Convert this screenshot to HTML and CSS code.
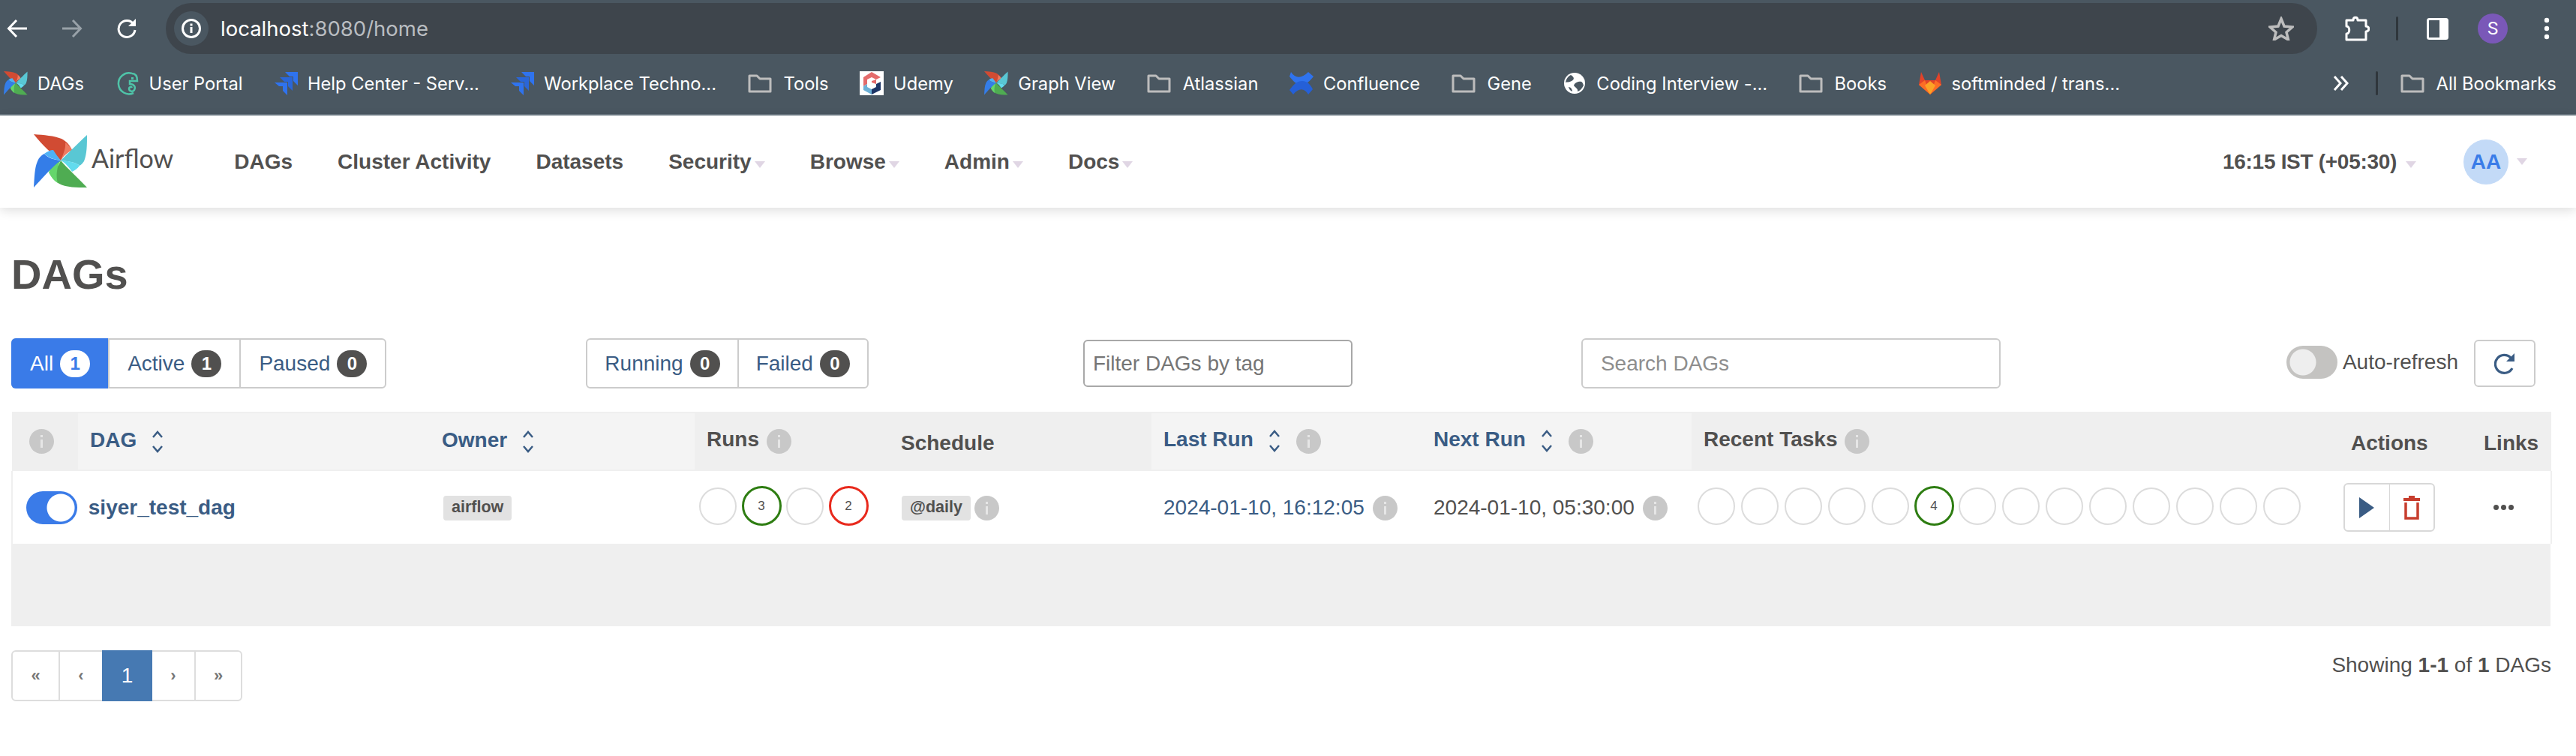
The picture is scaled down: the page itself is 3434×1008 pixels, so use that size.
FILE: index.html
```html
<!DOCTYPE html>
<html>
<head>
  <title>DAGs - Airflow</title>
  <link rel="stylesheet" href="styles.css">
</head>
<body>
  <svg class="defs" width="0" height="0">
    <symbol id="pinwheel" viewBox="0 0 72 72">
      <path fill="#d14b33" d="M0 0C14 1 27 2 37 6C43 9 48 14 51 21C44 24 39 29 36 35C26 28 11 14 0 0Z"/>
      <path fill="#ee7b62" d="M42 11C46 14 49 17 51 21C46 24 39 29 36 35C39 27 43 19 42 11Z"/>
      <path fill="#59c7d4" d="M71 1C71 14 71 26 67 36C65 39 63 41 61 42C57 37 43 36 36 35C44 27 58 13 71 1Z"/>
      <path fill="#62dbee" d="M36 35C43 36 55 36 61 42C58 46 55 48 51 50C47 44 42 38 36 35Z"/>
      <path fill="#4fac52" d="M71 71C57 71 44 71 34 66C29 63 24 58 21 51C28 48 33 43 36 35C44 45 60 59 71 71Z"/>
      <path fill="#65d66b" d="M36 35C31 42 29 55 32 65C27 62 23 57 20 51C22 44 29 38 36 35Z"/>
      <path fill="#347de8" d="M0 71C1 57 1 45 5 36C7 31 10 28 14 26C19 32 28 34 36 35C25 43 11 59 0 71Z"/>
      <path fill="#4fb1f5" d="M36 35C29 34 20 32 14 26C18 23 22 21 26 21C29 26 33 31 36 35Z"/>
    </symbol>
    <symbol id="jira" viewBox="0 0 32 32">
      <path fill="#2f73ee" d="M15 1H32V19L26 13V7H21Z"/>
      <path fill="#2a66d8" d="M8 8H25V26L19 20V14H14Z"/>
      <path fill="#2f73ee" d="M1 15H18V32L12 26V20H7Z"/>
    </symbol>
    <symbol id="folder" viewBox="0 0 32 32">
      <path fill="none" stroke="#bdbdbd" stroke-width="3" stroke-linejoin="round" d="M2 6H12L16 10H30V27H2Z"/>
    </symbol>
    <symbol id="info" viewBox="0 0 33 33">
      <circle cx="16.5" cy="16.5" r="16.5" fill="#c8c8c8"/>
      <rect x="15" y="14" width="3" height="11" fill="#e6e6e6"/>
      <rect x="15" y="8" width="3" height="3" fill="#e6e6e6"/>
    </symbol>
    <symbol id="sort" viewBox="0 0 16 30">
      <path fill="none" stroke="#3a5c84" stroke-width="2.5" d="M2 9L8 2L14 9M2 21L8 28L14 21"/>
    </symbol>
  </svg>

  <div class="toolbar">
    <svg class="tool-icon back" width="28" height="28" viewBox="0 0 28 28"><path fill="none" stroke="#fff" stroke-width="3" d="M27 14H3M13 3L2.5 14L13 25"/></svg>
    <svg class="tool-icon forward" width="28" height="28" viewBox="0 0 28 28"><path fill="none" stroke="#98a1a8" stroke-width="3" d="M1 14H25M15 3L25.5 14L15 25"/></svg>
    <svg class="tool-icon reload" width="28" height="28" viewBox="0 0 28 28"><path fill="none" stroke="#fff" stroke-width="3" d="M23 8A11 11 0 1 0 25 16"/><path fill="#fff" d="M26 1V11H16Z"/></svg>
    <div class="omnibox">
      <span class="site-info">
        <svg width="26" height="26" viewBox="0 0 26 26"><circle cx="13" cy="13" r="11.5" fill="none" stroke="#fff" stroke-width="3"/><rect x="11.5" y="11" width="3" height="8" fill="#fff"/><rect x="11.5" y="6.5" width="3" height="3" fill="#fff"/></svg>
      </span>
      <span class="url">localhost<span class="url-dim">:8080/home</span></span>
      <svg class="star" width="34" height="32" viewBox="0 0 34 32"><path fill="none" stroke="#bdbdbd" stroke-width="3.5" d="M17 3L21 13L32 14L24 21L26.5 31L17 25.5L7.5 31L10 21L2 14L13 13Z"/></svg>
    </div>
    <svg class="tool-icon puzzle" width="34" height="34" viewBox="0 0 34 34"><path fill="none" stroke="#fff" stroke-width="3" stroke-linejoin="round" d="M3 6H12C12 1 18 1 18 6H29V14C34 14 34 21 29 21V32H3V24C8 24 8 14 3 14Z"/></svg>
    <span class="tool-sep"></span>
    <svg class="tool-icon panel" width="29" height="29" viewBox="0 0 29 29"><rect x="1.5" y="1.5" width="26" height="26" rx="2" fill="none" stroke="#fff" stroke-width="3"/><rect x="17" y="2" width="10" height="25" fill="#fff"/></svg>
    <span class="avatar">S</span>
    <svg class="tool-icon kebab" width="8" height="30" viewBox="0 0 8 30"><circle cx="4" cy="4" r="3.2" fill="#fff"/><circle cx="4" cy="15" r="3.2" fill="#fff"/><circle cx="4" cy="26" r="3.2" fill="#fff"/></svg>
  </div>

  <div class="bookmarks">
    <a class="bookmark"><svg class="bm-icon"><use href="#pinwheel"/></svg>DAGs</a>
    <a class="bookmark"><svg class="bm-icon" viewBox="0 0 32 32"><path fill="none" stroke="#4fc3a8" stroke-width="2.5" d="M22 3A14 14 0 1 0 24 29M22 3C28 3 29 9 29 13H19V17C25 17 27 21 25 25C23 28 18 27 18 23C18 21 21 20 22 22"/><rect x="21" y="8" width="3" height="3" fill="#4fc3a8"/></svg>User Portal</a>
    <a class="bookmark"><svg class="bm-icon"><use href="#jira"/></svg>Help Center - Serv...</a>
    <a class="bookmark"><svg class="bm-icon"><use href="#jira"/></svg>Workplace Techno...</a>
    <a class="bookmark folder"><svg class="bm-icon"><use href="#folder"/></svg>Tools</a>
    <a class="bookmark"><svg class="bm-icon" viewBox="0 0 32 32"><rect width="32" height="32" fill="#fff"/><path fill="#e46b6b" d="M16 1L28 8L22 11L16 8L10 11V17L5 20V8Z"/><path fill="#6cb0d6" d="M5 20L10 17V21L16 24V31L5 25Z"/><path fill="#e46b6b" d="M16 13L22 11V17L16 15Z"/><path fill="#1d3566" d="M28 14V25L16 31V24L22 21V17Z"/></svg>Udemy</a>
    <a class="bookmark"><svg class="bm-icon"><use href="#pinwheel"/></svg>Graph View</a>
    <a class="bookmark folder"><svg class="bm-icon"><use href="#folder"/></svg>Atlassian</a>
    <a class="bookmark"><svg class="bm-icon" viewBox="0 0 32 32"><path fill="#2f73ee" d="M2 1C8 10 16 10 25 1L32 7C25 16 20 18 15 18C9 18 4 12 0 7Z"/><path fill="#2560d8" d="M0 25C6 17 10 13 17 13C24 13 28 18 31 24L25 31C20 22 12 22 5 31Z"/></svg>Confluence</a>
    <a class="bookmark folder"><svg class="bm-icon"><use href="#folder"/></svg>Gene</a>
    <a class="bookmark"><svg class="bm-icon" viewBox="0 0 32 32"><circle cx="16" cy="16" r="14" fill="#fff"/><path fill="#4a5761" d="M11 5C16 8 16 11 12 13C9 15 6 14 4 15C5 10 7 7 11 5ZM21 14C26 13 27 15 28 19C26 23 23 26 20 27C21 23 17 22 15 19C16 16 18 15 21 14ZM8 21C10 21 13 23 13 27C10 26 9 24 8 21Z"/></svg>Coding Interview -...</a>
    <a class="bookmark folder"><svg class="bm-icon"><use href="#folder"/></svg>Books</a>
    <a class="bookmark"><svg class="bm-icon" viewBox="0 0 32 32"><path fill="#e24329" d="M4 1L9 12H23L28 1L31 18L16 31L1 18Z"/><path fill="#fc6d26" d="M1 18L9 12L16 31ZM31 18L23 12L16 31Z"/><path fill="#fca326" d="M9 19L16 13L23 19L16 31Z"/></svg>softminded / trans...</a>
    <span class="more">
      <svg width="21" height="22" viewBox="0 0 21 22"><path fill="none" stroke="#fff" stroke-width="3" d="M2 2L10 11L2 20M11 2L19 11L11 20"/></svg>
    </span>
    <span class="bm-sep"></span>
    <a class="bookmark folder all-bookmarks"><svg class="bm-icon"><use href="#folder"/></svg>All Bookmarks</a>
  </div>

  <nav class="navbar">
    <a class="brand">
      <svg class="brand-logo"><use href="#pinwheel"/></svg>
      <span class="brand-name">Airflow</span>
    </a>
    <ul class="nav-list">
      <li>DAGs</li>
      <li>Cluster Activity</li>
      <li>Datasets</li>
      <li class="drop">Security</li>
      <li class="drop">Browse</li>
      <li class="drop">Admin</li>
      <li class="drop">Docs</li>
    </ul>
    <div class="nav-right">
      <span class="drop clock">16:15 IST (+05:30)</span>
      <span class="drop user"><span class="user-circle">AA</span></span>
    </div>
  </nav>

  <main class="content">
    <h1>DAGs</h1>

    <div class="filters">
      <div class="btn-group first-group">
        <a class="btn btn-active">All <span class="count">1</span></a>
        <a class="btn">Active <span class="count">1</span></a>
        <a class="btn">Paused <span class="count">0</span></a>
      </div>
      <div class="btn-group status-group">
        <a class="btn">Running <span class="count">0</span></a>
        <a class="btn">Failed <span class="count">0</span></a>
      </div>
      <input class="filter-tag" type="text" placeholder="Filter DAGs by tag">
      <input class="filter-search" type="text" placeholder="Search DAGs">
      <div class="auto-refresh">
        <span class="switch switch-off"></span>
        <span>Auto-refresh</span>
      </div>
      <a class="refresh">
        <svg width="28" height="30" viewBox="0 0 28 30"><path fill="none" stroke="#3a5c84" stroke-width="3.2" d="M22 7A12 12 0 1 0 24 21"/><path fill="#3a5c84" d="M27 1V12H16Z"/></svg>
      </a>
    </div>

    <table class="dags">
      <colgroup>
        <col class="col-info"><col class="col-dag"><col class="col-owner"><col class="col-runs"><col class="col-schedule"><col class="col-last"><col class="col-next"><col class="col-tasks"><col class="col-actions"><col class="col-links">
      </colgroup>
      <thead>
        <tr>
          <th class="th-icon"><svg class="info"><use href="#info"/></svg></th>
          <th class="sorted"><a>DAG</a><svg class="sort"><use href="#sort"/></svg></th>
          <th class="sorted th-owner"><a>Owner</a><svg class="sort"><use href="#sort"/></svg></th>
          <th class="th-left">Runs<svg class="info"><use href="#info"/></svg></th>
          <th class="th-plain">Schedule</th>
          <th class="sorted"><a>Last Run</a><svg class="sort"><use href="#sort"/></svg><svg class="info"><use href="#info"/></svg></th>
          <th class="sorted"><a>Next Run</a><svg class="sort"><use href="#sort"/></svg><svg class="info"><use href="#info"/></svg></th>
          <th>Recent Tasks<svg class="info"><use href="#info"/></svg></th>
          <th class="th-plain">Actions</th>
          <th class="th-plain">Links</th>
        </tr>
      </thead>
      <tbody>
        <tr>
          <td colspan="2" class="td-name">
            <span class="switch switch-on"></span>
            <a class="dag-name">siyer_test_dag</a>
          </td>
          <td><span class="label">airflow</span></td>
          <td class="td-runs">
            <div class="circles">
              <span class="slot"><span class="dot"></span></span>
              <span class="slot"><span class="dot dot-ok">3</span></span>
              <span class="slot"><span class="dot"></span></span>
              <span class="slot"><span class="dot dot-bad">2</span></span>
            </div>
          </td>
          <td class="td-schedule"><span class="label">@daily</span><svg class="info"><use href="#info"/></svg></td>
          <td><a class="date">2024-01-10, 16:12:05</a><svg class="info"><use href="#info"/></svg></td>
          <td><span class="date date-next">2024-01-10, 05:30:00</span><svg class="info"><use href="#info"/></svg></td>
          <td class="td-tasks">
            <div class="circles">
              <span class="slot"><span class="dot"></span></span>
              <span class="slot"><span class="dot"></span></span>
              <span class="slot"><span class="dot"></span></span>
              <span class="slot"><span class="dot"></span></span>
              <span class="slot"><span class="dot"></span></span>
              <span class="slot"><span class="dot dot-ok">4</span></span>
              <span class="slot"><span class="dot"></span></span>
              <span class="slot"><span class="dot"></span></span>
              <span class="slot"><span class="dot"></span></span>
              <span class="slot"><span class="dot"></span></span>
              <span class="slot"><span class="dot"></span></span>
              <span class="slot"><span class="dot"></span></span>
              <span class="slot"><span class="dot"></span></span>
              <span class="slot"><span class="dot"></span></span>
            </div>
          </td>
          <td class="td-actions">
            <div class="action-group">
              <a class="action"><svg width="20" height="28" viewBox="0 0 20 28"><path fill="#3a5c84" d="M0 0L20 14L0 28Z"/></svg></a>
              <a class="action"><svg width="22" height="32" viewBox="0 0 22 32"><path fill="#c73e2e" d="M7 0H15V3H22V7H0V3H7Z"/><path fill="none" stroke="#c73e2e" stroke-width="3.5" d="M3 9V30H19V9"/></svg></a>
            </div>
          </td>
          <td class="td-links"><span class="ellipsis"><i></i><i></i><i></i></span></td>
        </tr>
      </tbody>
    </table>
    <div class="table-empty"></div>

    <div class="table-footer">
      <ul class="pager">
        <li>«</li>
        <li>‹</li>
        <li class="pager-active">1</li>
        <li>›</li>
        <li>»</li>
      </ul>
      <p class="showing">Showing <b>1-1</b> of <b>1</b> DAGs</p>
    </div>
  </main>
</body>
</html>
```

FILE: styles.css
```css
* {
  box-sizing: border-box;
}

html,
body {
  margin: 0;
  padding: 0;
  overflow: hidden;
}

body {
  width: 3434px;
  height: 1008px;
  background-color: #fff;
  font-family: "Liberation Sans", Arial, sans-serif;
  font-size: 28px;
  color: #51504f;
}

.defs {
  position: absolute;
}

/* browser chrome */
.toolbar {
  display: flex;
  align-items: center;
  height: 72px;
  padding-top: 4px;
  background-color: #4a5761;
}

.tool-icon {
  flex: none;
}

.back {
  margin-left: 9px;
}

.forward {
  margin-left: 45px;
}

.reload {
  margin-left: 45px;
}

.omnibox {
  display: flex;
  align-items: center;
  width: 2868px;
  height: 68px;
  margin-left: 38px;
  padding: 0 31px 0 11px;
  background-color: #3e454c;
  border-radius: 34px;
}

.site-info {
  display: flex;
  align-items: center;
  justify-content: center;
  width: 46px;
  height: 46px;
  border-radius: 23px;
  background-color: #4a5761;
}

.url {
  margin-left: 16px;
  font-family: Inter, "Noto Sans", sans-serif;
  font-size: 27.5px;
  color: #fff;
}

.url-dim {
  color: #b9bdc1;
}

.star {
  margin-left: auto;
}

.puzzle {
  margin-left: 36px;
}

.tool-sep {
  width: 3px;
  height: 32px;
  margin-left: 35px;
  background-color: #2f363c;
  border-radius: 2px;
}

.panel {
  margin-left: 38px;
}

.avatar {
  display: flex;
  align-items: center;
  justify-content: center;
  width: 40px;
  height: 40px;
  margin-left: 39px;
  border-radius: 50%;
  background-color: #7a58b8;
  font-family: Roboto, sans-serif;
  font-size: 24px;
  color: #fff;
}

.kebab {
  margin-left: 48px;
}

.bookmarks {
  display: flex;
  align-items: center;
  height: 82px;
  padding-left: 5px;
  padding-bottom: 2px;
  gap: 41.5px;
  background-color: #4a5761;
  border-bottom: 2px solid #6a7882;
  font-family: Inter, "Noto Sans", sans-serif;
  font-size: 23.7px;
  color: #fff;
  white-space: nowrap;
}

.bookmark {
  display: flex;
  align-items: center;
  gap: 13px;
}

.bookmark.folder {
  gap: 16px;
}

.bm-icon {
  width: 32px;
  height: 32px;
  flex: none;
}

.more {
  display: flex;
  margin-left: 242px;
}

.bm-sep {
  width: 3px;
  height: 32px;
  margin-left: -5px;
  background-color: #2f363c;
  border-radius: 2px;
}

.all-bookmarks {
  margin-left: -12px;
}

/* airflow navbar */
.navbar {
  display: flex;
  align-items: center;
  height: 123px;
  background-color: #fff;
  box-shadow: 0 4px 14px rgba(0, 0, 0, 0.13);
  position: relative;
}

.brand {
  display: flex;
  align-items: center;
  margin-left: 45px;
  padding-bottom: 2px;
}

.brand-logo {
  width: 72px;
  height: 72px;
}

.brand-name {
  margin-left: 5px;
  margin-bottom: 8px;
  font-family: Lato, sans-serif;
  font-size: 34px;
}

.nav-list {
  display: flex;
  gap: 60px;
  margin: 0 0 0 81px;
  padding: 0;
  list-style: none;
  font-weight: bold;
}

.drop::after {
  content: "";
  display: inline-block;
  margin-left: 4px;
  vertical-align: 1px;
  border-top: 9px solid #e0d6e4;
  border-left: 7px solid transparent;
  border-right: 7px solid transparent;
}

.nav-right {
  display: flex;
  align-items: center;
  margin-left: auto;
  margin-right: 65px;
  font-weight: bold;
}

.clock {
  letter-spacing: -0.3px;
}

.clock::after {
  margin-left: 12px;
}

.user {
  display: flex;
  align-items: center;
  margin-left: 63px;
}

.user::after {
  margin-left: 11px;
}

.user-circle {
  display: flex;
  align-items: center;
  justify-content: center;
  width: 60px;
  height: 60px;
  border-radius: 50%;
  background-color: #c3daf7;
  color: #3a7ce8;
}

/* page */
.content {
  padding: 0 34px 0 15px;
}

h1 {
  margin: 58px 0 54px;
  font-size: 56px;
  line-height: 62px;
  font-weight: bold;
  color: #51504f;
}

.filters {
  display: flex;
  align-items: center;
  height: 67px;
}

.btn-group {
  display: flex;
  height: 67px;
  border: 2px solid #ccc;
  border-radius: 6px;
  color: #3a5c84;
}

.status-group {
  margin-left: 266px;
}

.btn {
  display: flex;
  align-items: center;
  gap: 9px;
  padding: 0 23px;
  border-left: 2px solid #ccc;
}

.btn:first-child {
  border-left: none;
}

.first-group .btn {
  padding: 0 24px;
}

.first-group .btn-active {
  margin: -2px 0 -2px -2px;
  padding: 0 24px 0 25px;
  background-color: #3a7be8;
  border-radius: 6px 0 0 6px;
  color: #fff;
}

.count {
  display: flex;
  align-items: center;
  justify-content: center;
  width: 40px;
  height: 36px;
  border-radius: 18px;
  background-color: #51504f;
  color: #fff;
  font-size: 24px;
  font-weight: bold;
}

.btn-active .count {
  background-color: #fff;
  color: #3a7be8;
}

input {
  height: 67px;
  padding: 0 14px;
  border: 2px solid #ccc;
  border-radius: 6px;
  font-family: inherit;
  font-size: 28px;
  background-color: #fff;
}

input::placeholder {
  color: #8e8e8e;
  opacity: 1;
}

.filter-tag {
  width: 359px;
  height: 63px;
  margin-left: 286px;
  border-color: #a8a8a8;
  padding: 0 11px;
}

.filter-tag::placeholder {
  color: #757575;
}

.filter-search {
  width: 559px;
  margin-left: 305px;
  padding: 0 24px;
}

.auto-refresh {
  display: flex;
  align-items: center;
  gap: 7px;
  margin-left: auto;
  padding-bottom: 4px;
}

.switch {
  display: inline-block;
  width: 68px;
  height: 44px;
  border-radius: 22px;
  flex: none;
}

.switch-off {
  background-color: #c4c3c1;
  background-image: radial-gradient(circle at 22px 22px, #eee 17px, transparent 18px);
}

.switch-on {
  background-color: #3a7be8;
  background-image: radial-gradient(circle at 46px 22px, #fff 18px, transparent 19px);
}

.refresh {
  display: flex;
  align-items: center;
  justify-content: center;
  width: 82px;
  height: 63px;
  margin-left: 21px;
  margin-right: 20px;
  border: 2px solid #ccc;
  border-radius: 6px;
}

.dags {
  width: 3385px;
  margin-top: 31px;
  border-collapse: collapse;
  table-layout: fixed;
}

.col-info { width: 88px; }
.col-dag { width: 471px; }
.col-owner { width: 351px; }
.col-runs { width: 259px; }
.col-schedule { width: 350px; }
.col-last { width: 360px; }
.col-next { width: 360px; }
.col-tasks { width: 863px; }
.col-actions { width: 177px; }
.col-links { width: 106px; }

.dags th {
  height: 79px;
  padding: 0 0 2px 16px;
  background-color: #efefef;
  text-align: left;
  font-weight: bold;
  white-space: nowrap;
}

.dags th a {
  color: #3a5c84;
}

.dags th.sorted {
  background-color: #f4f4f4;
  box-shadow: inset 0 2px 0 #efefef, inset 0 -2px 0 #efefef;
}

.dags th.th-owner {
  padding-left: 14px;
}

.dags th.th-icon {
  padding-left: 23px;
}

.dags th.th-plain {
  padding: 4px 0 0 16px;
}

.info,
.sort {
  display: inline-block;
  vertical-align: middle;
  flex: none;
}

.info {
  width: 33px;
  height: 33px;
  margin-left: 10px;
}

.th-icon .info {
  margin-left: 0;
}

.sort {
  width: 16px;
  height: 30px;
  margin-left: 20px;
}

.sort + .info {
  margin-left: 21px;
}

.dags td {
  height: 97px;
  padding: 0 0 0 16px;
  background-color: #fff;
  white-space: nowrap;
}

.dags td.td-name {
  padding-left: 18px;
  padding-bottom: 0;
  border-left: 2px solid #efefef;
}

.td-name .switch {
  vertical-align: middle;
}

.dag-name {
  margin-left: 7px;
  vertical-align: middle;
  font-weight: bold;
  color: #3a5c84;
}

.label {
  display: inline-block;
  padding: 3px 11px 5px;
  background-color: #e2e2e2;
  border-radius: 4px;
  font-size: 21.5px;
  font-weight: bold;
  vertical-align: middle;
}

.dags td.td-schedule {
  padding-left: 17px;
}

.td-schedule .info {
  margin-left: 5px;
}

.date {
  font-size: 28px;
  color: #3a5c84;
  vertical-align: middle;
}

.date-next {
  color: #51504f;
}

.date + .info {
  margin-left: 11px;
}

.circles {
  display: flex;
  margin-left: -8px;
}

.dags td.td-runs {
  padding-left: 10px;
  padding-bottom: 4px;
}

.dags td.td-tasks {
  padding-left: 12px;
  padding-bottom: 4px;
}

.slot {
  display: flex;
  align-items: center;
  justify-content: center;
  width: 58px;
  height: 54px;
}

.dot {
  display: flex;
  align-items: center;
  justify-content: center;
  width: 50px;
  height: 50px;
  border: 2px solid #dcdcdc;
  border-radius: 50%;
  font-size: 17px;
}

.dot-ok,
.dot-bad {
  flex: none;
  width: 53px;
  height: 53px;
  border-width: 3px;
}

.dot-ok {
  border-color: #2e7d12;
}

.dot-bad {
  border-color: #e8291c;
}

.dags td.td-actions {
  padding-left: 6px;
}

.action-group {
  display: flex;
  width: 122px;
  height: 65px;
  border: 2px solid #d8d8d8;
  border-radius: 6px;
}

.action {
  display: flex;
  align-items: center;
  justify-content: center;
  flex: 1;
}

.action + .action {
  border-left: 1px solid #d8d8d8;
}

.dags td.td-links {
  padding-left: 29px;
  border-right: 2px solid #efefef;
}

.ellipsis {
  display: flex;
  gap: 3px;
}

.ellipsis i {
  width: 7px;
  height: 7px;
  border-radius: 50%;
  background-color: #51504f;
}

.table-empty {
  width: 3385px;
  height: 110px;
  background-color: #efefef;
}

.table-footer {
  display: flex;
  justify-content: space-between;
  width: 3386px;
  margin-top: 32px;
}

.pager {
  display: flex;
  height: 68px;
  margin: 0;
  padding: 0;
  list-style: none;
  border: 2px solid #ddd;
  border-radius: 6px;
  color: #777;
  font-size: 22px;
  font-weight: bold;
}

.pager li {
  display: flex;
  align-items: center;
  justify-content: center;
  width: 58px;
  border-left: 2px solid #ddd;
}

.pager li:first-child {
  width: 61px;
  border-left: none;
}

.pager li:last-child {
  width: 62px;
}

.pager li.pager-active {
  width: 67px;
  margin: -2px 0;
  border-left: none;
  background-color: #4679b2;
  color: #fff;
  font-size: 28px;
  font-weight: normal;
}

.pager-active + li {
  border-left: none;
  width: 56px;
}

.showing {
  margin: 4px 0 0;
  font-size: 28px;
}
```
